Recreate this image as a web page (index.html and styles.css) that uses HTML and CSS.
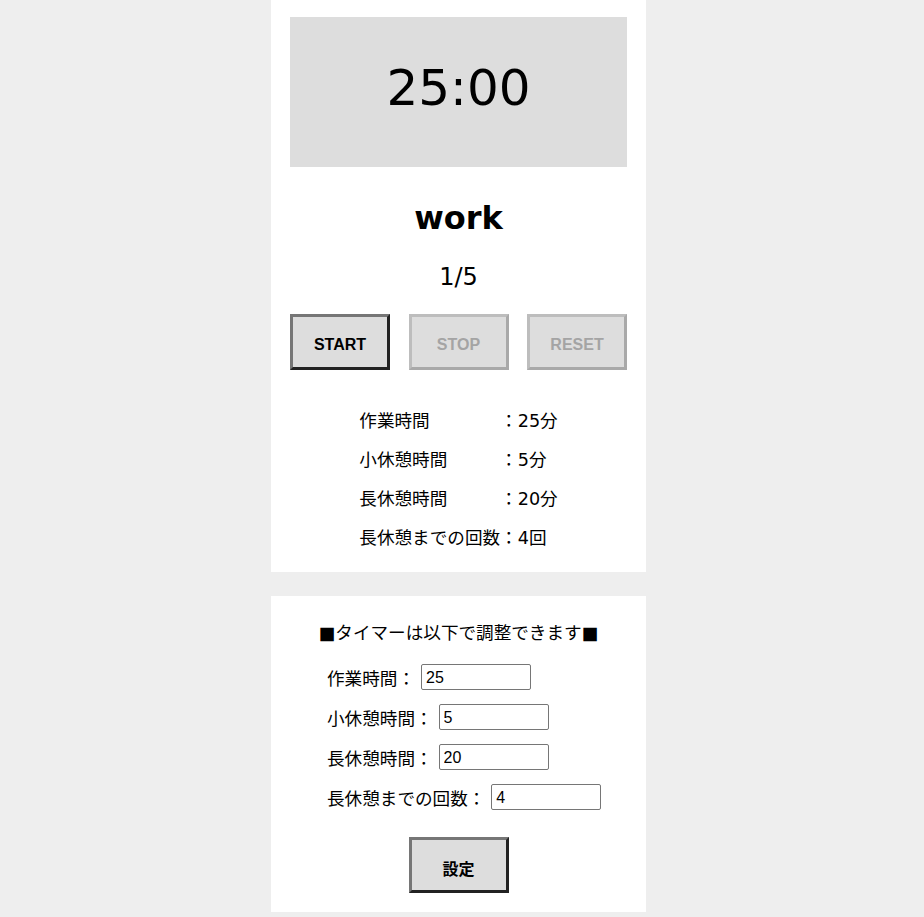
FILE: index.html
```html
<!DOCTYPE html>
<html lang="ja">
<head>
<meta charset="utf-8">
<title>Pomodoro Timer</title>
<link rel="stylesheet" href="styles.css">
</head>
<body>
<div class="page">
  <section class="panel panel-timer">
    <div class="timer">25:00</div>
    <h1 class="mode">work</h1>
    <p class="count">1/5</p>
    <div class="controls">
      <button class="btn">START</button>
      <button class="btn" disabled>STOP</button>
      <button class="btn" disabled>RESET</button>
    </div>
    <div class="info">
      <span>作業時間</span><span>：25分</span>
      <span>小休憩時間</span><span>：5分</span>
      <span>長休憩時間</span><span>：20分</span>
      <span>長休憩までの回数</span><span>：4回</span>
    </div>
  </section>
  <section class="panel panel-settings">
    <p class="settings-title">■タイマーは以下で調整できます■</p>
    <div class="form">
      <label class="row">作業時間： <input class="field" type="text" value="25"></label>
      <label class="row">小休憩時間： <input class="field" type="text" value="5"></label>
      <label class="row">長休憩時間： <input class="field" type="text" value="20"></label>
      <label class="row">長休憩までの回数： <input class="field" type="text" value="4"></label>
    </div>
    <div class="submit">
      <button class="btn">設定</button>
    </div>
  </section>
</div>
</body>
</html>
```
FILE: styles.css
```css
html, body {
  margin: 0;
  padding: 0;
  background: #eeeeee;
}
body {
  font-family: "DejaVu Sans", "Noto Sans CJK JP", sans-serif;
  color: #000;
}
.page {
  width: 917px;
  display: flex;
  flex-direction: column;
  align-items: center;
  gap: 24px;
}
.panel {
  width: 375px;
  background: #fff;
  box-sizing: border-box;
}
.panel-timer {
  padding: 17px 19px 16px;
  display: flex;
  flex-direction: column;
}
.timer {
  height: 150px;
  background: #dddddd;
  display: flex;
  align-items: center;
  justify-content: center;
  font-size: 50px;
  padding-bottom: 8px;
  box-sizing: border-box;
}
.mode {
  margin: 31px 0 0;
  font-size: 32px;
  line-height: 40px;
  font-weight: bold;
  text-align: center;
}
.count {
  margin: 24px 0 0;
  font-size: 24px;
  line-height: 30px;
  text-align: center;
}
.controls {
  margin-top: 22px;
  display: flex;
  justify-content: space-between;
}
.btn {
  width: 100px;
  height: 56px;
  box-sizing: border-box;
  border: 3px solid;
  border-color: #767676 #222222 #222222 #767676;
  background: #dddddd;
  font-family: "Liberation Sans", "Noto Sans CJK JP", sans-serif;
  font-weight: bold;
  font-size: 16px;
  color: #000;
  padding: 6px 0 0;
}
.btn:disabled {
  border-color: #bdbdbd #a9a9a9 #a9a9a9 #bdbdbd;
  color: #a4a4a4;
}
.info {
  margin-top: 30px;
  display: grid;
  grid-template-columns: auto auto;
  grid-auto-rows: 39px;
  justify-content: center;
  align-items: center;
  font-size: 17.6px;
}
.panel-settings {
  padding: 22px 0 19px;
  display: flex;
  flex-direction: column;
}
.settings-title {
  margin: 0;
  font-size: 17.6px;
  line-height: 30px;
  text-align: center;
}
.form {
  margin-top: 9px;
  padding-left: 56px;
  display: flex;
  flex-direction: column;
}
.row {
  height: 40px;
  display: flex;
  align-items: center;
  gap: 6px;
  font-size: 17.6px;
}
.field {
  width: 110px;
  height: 26px;
  box-sizing: border-box;
  border: 1px solid #767676;
  border-radius: 2px;
  padding: 1px 4px 0;
  font-family: "Liberation Sans", sans-serif;
  font-size: 16px;
  color: #000;
  background: #fff;
}
.submit {
  margin-top: 20px;
  display: flex;
  justify-content: center;
}
```
